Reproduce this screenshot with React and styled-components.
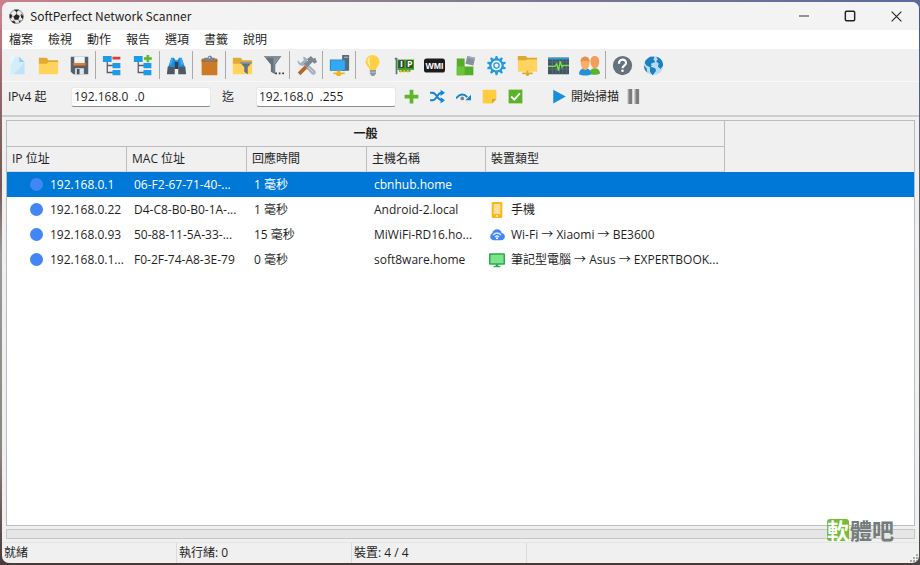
import { useState } from 'react'
import styled, { createGlobalStyle } from 'styled-components'

const menus = ['檔案', '檢視', '動作', '報告', '選項', '書籤', '說明']

const devices = [
  { ip: '192.168.0.1', mac: '06-F2-67-71-40-...', time: '1 毫秒', host: 'cbnhub.home' },
  { ip: '192.168.0.22', mac: 'D4-C8-B0-B0-1A-...', time: '1 毫秒', host: 'Android-2.local', type: '手機', icon: 'phone' },
  { ip: '192.168.0.93', mac: '50-88-11-5A-33-...', time: '15 毫秒', host: 'MiWiFi-RD16.ho...', type: 'Wi-Fi → Xiaomi → BE3600', icon: 'cloud' },
  { ip: '192.168.0.1...', mac: 'F0-2F-74-A8-3E-79', time: '0 毫秒', host: 'soft8ware.home', type: '筆記型電腦 → Asus → EXPERTBOOK...', icon: 'screen' },
]

const Tree = ({ children }) => (
  <>
    <path d="M6 7v13h7M6 12h7" fill="none" stroke="#5a6068" strokeWidth="1.5" />
    <path d="M1 1h10v7H1zM12 9h9v6h-9zM12 17h9v6h-9z" fill="#1b9be8" />
    {children}
  </>
)

const Folder = () => (
  <>
    <path d="M1 3h9l2 3h11v5H1z" fill="#dfaa35" />
    <path d="M1 10h9l2-2h11v14H1z" fill="#ffd35c" />
  </>
)

const gearTeeth = [0, 36, 72, 108, 144, 180, 216, 252, 288, 324]

const icons = {
  new: (
    <>
      <path d="M4 2h10l6 6v14H4z" fill="#d3edfb" />
      <path d="M4 2h5L4 12z" fill="#eaf7fd" />
      <path d="M20 8v14H8z" fill="#bfe3f8" />
      <path d="M14 2l6 6h-6z" fill="#93cdf0" />
    </>
  ),
  open: <Folder />,
  save: (
    <>
      <path d="M2 2h20v20H5l-3-3z" fill="#56616c" />
      <path d="M6 2h12v9H6z" fill="#f4f6f8" />
      <path d="M5 9h14v3H5z" fill="#f07a21" />
      <path d="M7 15h10v7H7z" fill="#dfe4e8" />
      <path d="M9 16h3v6H9z" fill="#46515b" />
    </>
  ),
  collapse: <Tree><path d="M12 2h9v3h-9z" fill="#e23b36" /></Tree>,
  expand: <Tree><path d="M16 0h2v3h3v2h-3v3h-2V5h-3V3h3z" fill="#5cb82c" stroke="#5cb82c" /></Tree>,
  find: (
    <>
      <path d="M6 3h3l2 3h2l2-3h3l4 12H2z" fill="#1c8fdd" />
      <path d="M2 13l8 1v8H1zM22 13l-8 1v8h9z" fill="#4e5963" />
      <path d="M10 8h4v8h-4z" fill="#35414c" />
      <path d="M6 4h2l-2 7H4zM16 4h2l2 7h-3z" fill="#42b0f5" />
    </>
  ),
  paste: (
    <>
      <rect x="3" y="4" width="18" height="19" rx="1" fill="#cc7a26" />
      <path d="M3 5h18v3H3z" fill="#b66a20" />
      <path d="M6 3h4c0-3 5-3 5 0h3v4H6z" fill="#77828b" />
      <circle cx="12" cy="3" r="1" fill="#dce2e6" />
    </>
  ),
  folderFilter: (
    <>
      <Folder />
      <path d="M9 8h14l-5 6v8l-4-3v-5z" fill="#65727c" />
      <path d="M9 8h14l-1 2H10z" fill="#89959d" />
    </>
  ),
  filter: (
    <>
      <path d="M1 1h20l-7 10v11l-5-3v-8z" fill="#64727e" />
      <path d="M1 1h20l-2 2H3z" fill="#85919b" />
      <path d="M12 3h7l-6 8v9l-1-1z" fill="#87949e" />
      <path d="M14 20h2v2h-2zM18 20h2v2h-2zM22 20h2v2h-2z" fill="#343b42" />
    </>
  ),
  tools: (
    <>
      <path d="M8 2c4 0 6 4 4 7l10 9c2 3-1 6-4 4L9 12C5 13 1 10 2 6l3 3 4-3z" fill="#a4b0bb" />
      <path d="M12 5l5-4 3 3 2-1 2 5-3 2-2-2-6 6-4-4 5-4z" fill="#7c8995" />
      <path d="M10 12l3 3-8 8-3-3z" fill="#b9652d" />
      <path d="M14 14l6 6" stroke="#d9dfe4" />
    </>
  ),
  computer: (
    <>
      <path d="M15 0h8v18h-8z" fill="#5c6872" />
      <path d="M17 2h5v1h-5z" fill="#b8c1c8" />
      <path d="M1 5h18v13H1z" fill="#1c82c6" />
      <path d="M2 6h16v11H2z" fill="#34a9f2" />
      <path d="M9 18h4v2h5v2h-4l-1 2H9l-1-2H5v-2h4z" fill="#edb51f" />
    </>
  ),
  bulb: (
    <>
      <path d="M12 0a8 8 0 0 1 8 8c0 4-4 6-4 10H9C9 14 4 12 4 8a8 8 0 0 1 8-8z" fill="#ffd044" />
      <path d="M9 2c-5 3-2 8 1 12-1-5-2-8-1-12z" fill="#fff0aa" />
      <path d="M9 17h7v4l-2 3h-3l-2-3z" fill="#8d98a1" />
      <path d="M9 19h7v1H9z" fill="#c4cbd0" />
    </>
  ),
  ip: (
    <>
      <path d="M2 3h3v19H3V5H2z" fill="#62717a" />
      <path d="M5 5h19v12h-4v2H7v-2H5z" fill="#4aa52f" />
      <path d="M8 17h2v3H8zM12 17h2v3h-2zM16 17h2v3h-2z" fill="#e4bb34" />
      <rect x="6" y="6" width="7" height="9" fill="#315129" />
      <rect x="15" y="6" width="8" height="9" fill="#315129" />
      <text x="8" y="14" fontSize="10" fontWeight="700" fill="#fff">I</text>
      <text x="16" y="14" fontSize="10" fontWeight="700" fill="#fff">P</text>
    </>
  ),
  wmi: (
    <>
      <rect x="0" y="4" width="24" height="16" rx="3" fill="#1c1c1c" />
      <IconText x="12" y="16" fontSize="10" textAnchor="middle" fill="#fff">WMI</IconText>
    </>
  ),
  plugin: (
    <>
      <path d="M2 4h9v9h10v10H2z" fill="#55ac28" />
      <path d="M2 13h9v10H2z" fill="#6bc339" />
      <path d="M14 1l9 2-2 9-9-2z" fill="#84919d" />
      <path d="M14 1l9 2-1 2-8-2z" fill="#9dabb5" />
    </>
  ),
  gear: (
    <>
      {gearTeeth.map((a) => (
        <path key={a} d="M10 5l1-4h2l1 4z" fill="#2499e2" transform={`rotate(${a} 12 12)`} />
      ))}
      <circle cx="12" cy="12" r="7" fill="#f4f9fc" stroke="#2499e2" strokeWidth="2.500" />
      <circle cx="12" cy="12" r="3" fill="#f0f0f0" stroke="#2499e2" strokeWidth="1.500" />
    </>
  ),
  share: (
    <>
      <path d="M1 1h9l2 3h11v15H1z" fill="#ffd35e" />
      <path d="M1 1h9l2 2h11v2H12l-2 1H1z" fill="#dca935" />
      <path d="M11 18h2v2h5v2h-4l-1 2h-2l-1-2H6v-2h5z" fill="#dfaa20" />
    </>
  ),
  monitor: (
    <>
      <rect x="0" y="3" width="24" height="19" fill="#405460" />
      <path d="M0 8h24M0 12h24M0 16h24M5 3v19M9 3v19M13 3v19M17 3v19M21 3v19" stroke="#5b707d" />
      <path d="M0 3h24v2H0z" fill="#2c99d7" />
      <path d="M0 13h8l2-3 2 8 2-11 2 7 1-2h7" fill="none" stroke="#72e345" strokeWidth="1.500" />
    </>
  ),
  users: (
    <>
      <path d="M12 21c0-8 12-8 12 0-2 2-10 2-12 0z" fill="#5bb52c" />
      <path d="M13 7c0-8 10-8 10 0 0 5-2 8-5 8s-5-4-5-8z" fill="#f0a05a" />
      <path d="M0 22c0-9 14-9 14 0-3 2-11 2-14 0z" fill="#258fd9" />
      <path d="M2 8c0-8 10-8 10 0 0 5-2 9-5 9s-5-4-5-9z" fill="#f7ae69" />
      <path d="M2 8c-1-8 11-8 10 0-2-2-8-2-10 0z" fill="#e98e44" />
    </>
  ),
  help: (
    <>
      <circle cx="12" cy="12" r="11" fill="#65717d" />
      <path d="M8 10c0-6 8-6 8-1 0 3-4 3-4 6" fill="none" stroke="#fff" strokeWidth="2.500" />
      <circle cx="12" cy="18" r="1.500" fill="#fff" />
    </>
  ),
  globe: (
    <>
      <circle cx="12" cy="12" r="11" fill="#b5dbf3" />
      <path d="M3 6l5-4 5 0-1 3 2 3-5 2 1 2-2 2-4-2-2-3zM15 2c5 1 8 5 8 10l-3 4-3-3 1-3-3-3 2-2zM8 13l6 2 1 3-4 5-3-4zM1 12l3 3 1 5c-3-2-4-5-4-8z" fill="#1b7fc0" />
    </>
  ),
  add: <path d="M9 1h6v8h8v6h-8v8H9v-8H1V9h8z" fill="#61b52c" />,
  shuffle: (
    <>
      <path d="M0 6h4c7 0 7 12 15 12M0 18h4c7 0 7-12 15-12" fill="none" stroke="#1784cc" strokeWidth="3" />
      <path d="M17 1l7 5-7 5zM17 13l7 5-7 5z" fill="#1784cc" />
    </>
  ),
  hop: (
    <>
      <path d="M0 15c6-8 13-8 18-2" fill="none" stroke="#1784cc" strokeWidth="3" />
      <path d="M24 9v9h-9z" fill="#1784cc" />
      <circle cx="10" cy="15" r="3" fill="#7b8790" />
    </>
  ),
  note: (
    <>
      <path d="M1 3q0-2 2-2h20v15l-7 7H3q-2 0-2-2z" fill="#ffcc42" />
      <path d="M23 16h-7v7z" fill="#e5a524" />
    </>
  ),
  check: (
    <>
      <rect x="1" y="1" width="22" height="22" fill="#5bb329" />
      <path d="M5 12l5 5 9-10" fill="none" stroke="#fff" strokeWidth="3" />
    </>
  ),
  play: <path d="M2 1l20 11L2 23z" fill="#178fdf" />,
  pause: (
    <>
      <path d="M3 0h7v24H3zM14 0h7v24h-7z" fill="#7c7c7c" />
      <path d="M3 0h2v24H3zM14 0h2v24h-2z" fill="#a5a5a5" />
    </>
  ),
  phone: (
    <>
      <rect x="4" y="0" width="16" height="24" rx="2" fill="#fbb718" />
      <path d="M7 3h10v15H7z" fill="#ffe09a" />
      <circle cx="12" cy="21" r="1.500" fill="#fff3cf" />
    </>
  ),
  cloud: (
    <>
      <path d="M6 20a6 6 0 0 1-1-11c2-8 13-7 14 0 7 1 6 11-1 11z" fill="#4285f4" />
      <path d="M6 12c4-4 8-4 12 0M9 15c2-2 4-2 6 0" fill="none" stroke="#d9e8ff" strokeWidth="2" />
      <circle cx="12" cy="17" r="1.500" fill="#fff" />
    </>
  ),
  screen: (
    <>
      <rect x="1" y="3" width="22" height="15" rx="1" fill="#7be58d" stroke="#2baa4b" strokeWidth="2.500" />
      <path d="M10 18h4v3h3v2H7v-2h3z" fill="#2baa4b" />
    </>
  ),
  ball: (
    <>
      <circle cx="12" cy="12" r="11" fill="#e9e9e9" stroke="#555" />
      <path d="M12 8l5 3-2 6H9l-2-5zM8 1h8l-4 4zM1 8l4 1-1 6-3-1zM20 7l3 5-1 4-3-3zM6 19l4 1v3c-3 0-5-2-6-4zM16 19l4-1-4 4z" fill="#252525" />
      <path d="M12 5v3M17 11l3-2M15 17l2 3M9 17l-3 3M7 12l-3-1" stroke="#555" />
    </>
  ),
  minimize: <path d="M2 12h20" stroke="#333" strokeWidth="2" />,
  maximize: <rect x="4" y="4" width="16" height="16" rx="2" fill="none" stroke="#222" strokeWidth="2.500" />,
  close: <path d="M3 3l18 18M21 3L3 21" stroke="#222" strokeWidth="2" />,
}

const toolGroups = [
  [['new', '新增'], ['open', '開啟'], ['save', '儲存']],
  [['collapse', '全部摺疊'], ['expand', '全部展開']],
  [['find', '尋找']],
  [['paste', '貼上']],
  [['folderFilter', '篩選資料夾'], ['filter', '篩選']],
  [['tools', '工具']],
  [['computer', '電腦']],
  [['bulb', '喚醒'], ['ip', 'IP'], ['wmi', 'WMI'], ['plugin', '外掛'], ['gear', '服務'], ['share', '共用資料夾'], ['monitor', '效能'], ['users', '使用者']],
  [['help', '說明'], ['globe', '網站']],
]

const rangeTools = [['add', '新增範圍'], ['shuffle', '隨機'], ['hop', '略過'], ['note', '備註'], ['check', '選取']]

function IconText(props) {
  return <text fontFamily="Liberation Sans, sans-serif" fontWeight="700" {...props} />
}

function Icon({ name, size = 21 }) {
  return (
    <Svg viewBox="0 0 24 24" width={size} height={size} aria-hidden="true">
      {icons[name]}
    </Svg>
  )
}

export default function App() {
  const [selected, setSelected] = useState(0)
  const [from, setFrom] = useState('192.168.0  .0')
  const [to, setTo] = useState('192.168.0  .255')

  return (
    <Desktop>
      <GlobalStyle />
      <Window>
        <TitleBar>
          <Icon name="ball" size={15} />
          <h1>SoftPerfect Network Scanner</h1>
          <WindowButton aria-label="最小化"><Icon name="minimize" size={12} /></WindowButton>
          <WindowButton aria-label="最大化"><Icon name="maximize" size={14} /></WindowButton>
          <WindowButton aria-label="關閉"><Icon name="close" size={13} /></WindowButton>
        </TitleBar>

        <MenuBar>
          {menus.map((m) => <MenuButton key={m}>{m}</MenuButton>)}
        </MenuBar>

        <Toolbar>
          {toolGroups.map((group, i) => (
            <ToolGroup key={i}>
              {group.map(([name, label]) => (
                <ToolButton key={name} aria-label={label}><Icon name={name} /></ToolButton>
              ))}
            </ToolGroup>
          ))}
        </Toolbar>

        <RangeBar>
          <RangeLabel htmlFor="from" $width={63}>IPv4 起</RangeLabel>
          <AddressInput id="from" value={from} onChange={(e) => setFrom(e.target.value)} />
          <RangeLabel htmlFor="to" $width={45} $indent={11}>迄</RangeLabel>
          <AddressInput id="to" value={to} onChange={(e) => setTo(e.target.value)} />
          <RangeTools>
            {rangeTools.map(([name, label]) => (
              <RangeButton key={name} aria-label={label}><Icon name={name} size={15} /></RangeButton>
            ))}
          </RangeTools>
          <ScanButton><Icon name="play" size={15} />開始掃描</ScanButton>
          <ScanButton aria-label="暫停"><Icon name="pause" size={15} /></ScanButton>
        </RangeBar>

        <Content>
          <ListPane>
            <DeviceTable>
              <colgroup>
                <Col $width={120} />
                <Col $width={120} />
                <Col $width={120} />
                <Col $width={119} />
                <Col $width={239} />
                <col />
              </colgroup>
              <thead>
                <tr>
                  <GroupHeader colSpan={5} scope="colgroup">一般</GroupHeader>
                  <Filler rowSpan={2} />
                </tr>
                <tr>
                  <HeaderCell scope="col">IP 位址</HeaderCell>
                  <HeaderCell scope="col">MAC 位址</HeaderCell>
                  <HeaderCell scope="col">回應時間</HeaderCell>
                  <HeaderCell scope="col">主機名稱</HeaderCell>
                  <HeaderCell scope="col">裝置類型</HeaderCell>
                </tr>
              </thead>
              <tbody>
                {devices.map((d, i) => (
                  <Row key={d.mac} $selected={i === selected} onClick={() => setSelected(i)}>
                    <IpCell><Dot />{d.ip}</IpCell>
                    <Cell>{d.mac}</Cell>
                    <Cell>{d.time}</Cell>
                    <Cell>{d.host}</Cell>
                    <TypeCell>
                      {d.type && <DeviceType><Icon name={d.icon} size={16} />{d.type}</DeviceType>}
                    </TypeCell>
                    <Cell />
                  </Row>
                ))}
              </tbody>
            </DeviceTable>
          </ListPane>
          <ProgressTrack role="progressbar" aria-label="掃描進度" aria-valuenow={0} />
        </Content>

        <StatusBar>
          <StatusCell>就緒</StatusCell>
          <StatusCell>執行緒: 0</StatusCell>
          <StatusCell>裝置: 4 / 4</StatusCell>
          <Grip viewBox="0 0 10 10" width="10" height="10" aria-hidden="true">
            <path d="M7 1h2v2H7zM4 4h2v2H4zM7 4h2v2H7zM1 7h2v2H1zM4 7h2v2H4zM7 7h2v2H7z" fill="#aaa" />
          </Grip>
        </StatusBar>
        <Watermark><span>軟</span>體吧</Watermark>
      </Window>
    </Desktop>
  )
}

const GlobalStyle = createGlobalStyle`
  * {
    box-sizing: border-box;
  }

  body {
    margin: 0;
    font-family: "Open Sans", "Noto Sans CJK TC", sans-serif;
    font-size: 12px;
    line-height: 16px;
    color: #1f1f1f;
  }

  button, input {
    font: inherit;
    color: inherit;
  }

  button {
    border: 0;
    padding: 0;
    background: none;
  }
`

const Svg = styled.svg`
  display: block;
  flex: none;
`

const Desktop = styled.div`
  display: flex;
  min-height: 100vh;
  padding: 2px 1px 2px 2px;
  background:
    linear-gradient(90deg, #c9808a, #8a7f8c 40%, #5a6a9c) top / 100% 8px no-repeat,
    linear-gradient(180deg, #3d5a96, #5f6470 30%, #77736a 60%, #4a4444) right / 8px 100% no-repeat,
    linear-gradient(180deg, #d08890 0%, #95686b 15%, #6f5a56 33%, #9a9a9a 45%, #8a8580 80%, #4a3838 100%);
`

const Window = styled.main`
  position: relative;
  flex: 1;
  min-width: 0;
  display: flex;
  flex-direction: column;
  border-radius: 7px;
  overflow: hidden;
  background: #f0f0f0;
`

const TitleBar = styled.header`
  display: flex;
  align-items: center;
  height: 28px;
  padding-left: 7px;
  background: #f3f3f3;

  h1 {
    flex: 1;
    margin: 0 0 0 6px;
    font-family: "Noto Sans CJK TC", sans-serif;
    font-size: 12px;
    font-weight: 400;
  }
`

const WindowButton = styled.button`
  display: flex;
  align-items: center;
  justify-content: center;
  width: 46px;
  height: 28px;
`

const MenuBar = styled.nav`
  display: flex;
  gap: 15px;
  height: 19px;
  padding: 0 7px;
  background: #fff;
`

const MenuButton = styled.button`
  line-height: 18px;
`

const Toolbar = styled.div`
  display: flex;
  align-items: center;
  height: 33px;
  border-bottom: 1px solid #f8f8f8;
`

const ToolGroup = styled.div`
  display: flex;

  & + & {
    padding-left: 1px;
    border-left: 1px solid #a9a9a9;
  }
`

const ToolButton = styled.button`
  display: flex;
  align-items: center;
  justify-content: center;
  width: 31px;
  height: 28px;
`

const RangeBar = styled.div`
  display: flex;
  align-items: center;
  height: 35px;
  padding: 0 6px 4px;
  border-bottom: 2px solid #cdcdcd;
`

const RangeLabel = styled.label`
  width: ${(p) => p.$width}px;
  padding-left: ${(p) => p.$indent || 0}px;
`

const AddressInput = styled.input`
  width: 140px;
  height: 20px;
  padding: 0 2px;
  border: 1px solid #e8e8e8;
  border-bottom-color: #8c8c8c;
  border-radius: 3px;
  background: #fff;
  outline: none;
`

const RangeTools = styled.div`
  display: flex;
  margin: 0 24px 0 2px;
`

const RangeButton = styled.button`
  display: flex;
  align-items: center;
  justify-content: center;
  width: 26px;
  height: 24px;
`

const ScanButton = styled.button`
  display: flex;
  align-items: center;
  gap: 4px;
  margin-right: 7px;
`

const Content = styled.section`
  flex: 1;
  display: flex;
  flex-direction: column;
  gap: 3px;
  padding: 3px 4px;
`

const ListPane = styled.div`
  flex: 1;
  border: 1px solid #b9bcc2;
  background: #fff;
`

const DeviceTable = styled.table`
  width: 100%;
  table-layout: fixed;
  border-collapse: separate;
  border-spacing: 0;
`

const Col = styled.col`
  width: ${(p) => p.$width}px;
`

const HeaderCell = styled.th`
  height: 25px;
  padding: 0 5px;
  border-right: 1px solid #bcbcbc;
  border-bottom: 1px solid #d8d8d8;
  background: #f0f0f0;
  font-weight: 400;
  text-align: left;
`

const GroupHeader = styled(HeaderCell)`
  height: 26px;
  border-bottom-color: #bcbcbc;
  font-weight: 700;
  text-align: center;
`

const Filler = styled.td`
  padding: 0;
  background: #f0f0f0;
`

const Row = styled.tr`
  background: ${(p) => (p.$selected ? '#0078d7' : '#fff')};
  color: ${(p) => (p.$selected ? '#fff' : '#1f1f1f')};
`

const Cell = styled.td`
  height: 25px;
  padding: 0 0 0 7px;
  white-space: nowrap;
  overflow: hidden;
`

const IpCell = styled(Cell)`
  padding-left: 23px;
`

const TypeCell = styled(Cell)`
  padding-left: 3px;
`

const Dot = styled.span`
  display: inline-block;
  width: 13px;
  height: 13px;
  margin-right: 7px;
  border-radius: 50%;
  background: #4285f4;
  vertical-align: -2px;
`

const DeviceType = styled.span`
  display: flex;
  align-items: center;
  gap: 6px;
`

const ProgressTrack = styled.div`
  height: 10px;
  border: 1px solid #c6c6c6;
  background: #e6e6e6;
`

const StatusBar = styled.footer`
  display: flex;
  height: 21px;
  border-top: 1px solid #e4e4e4;
`

const StatusCell = styled.div`
  width: 175px;
  padding-left: 2px;
  line-height: 20px;
  border-right: 1px solid #dcdcdc;
`

const Grip = styled(Svg)`
  align-self: flex-end;
  margin-left: auto;
`

const Watermark = styled.div`
  position: absolute;
  right: 25px;
  bottom: 22px;
  font-size: 22px;
  font-weight: 700;
  line-height: 22px;
  color: #737b7d;

  span {
    display: inline-block;
    margin-right: 1px;
    border-radius: 3px;
    background: #72bf35;
    color: #fff;
  }
`
